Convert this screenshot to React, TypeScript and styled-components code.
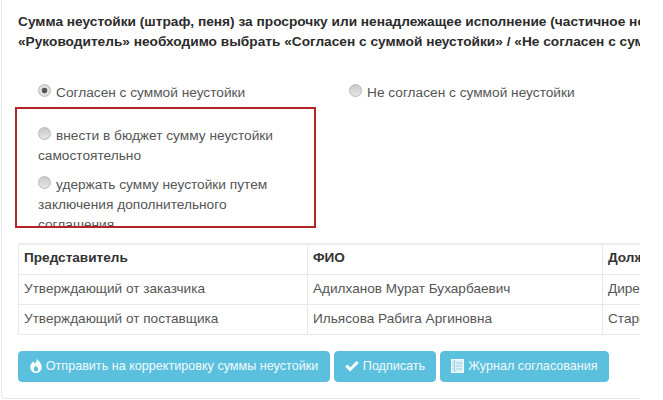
import React from 'react';
import styled, { createGlobalStyle } from 'styled-components';

const GlobalStyle = createGlobalStyle`
  html, body {
    margin: 0;
    padding: 0;
    background: #fff;
  }
  body {
    width: 663px;
    height: 400px;
    overflow: hidden;
    font-family: "Liberation Sans", Arial, sans-serif;
    font-size: 13.7px;
    line-height: 20px;
    color: #333;
  }
`;

const Clip = styled.div`
  width: 640px;
  height: 400px;
  overflow: hidden;
`;

const Panel = styled.section`
  box-sizing: border-box;
  width: 700px;
  height: 399px;
  margin-left: 1px;
  padding: 12px 0 0 16px;
  border: 1px solid #e6e6e6;
  border-top: 0;
  border-right: 0;
  border-radius: 0 0 0 5px;
`;

const Heading = styled.p`
  margin: 0;
  width: 640px;
  height: 40px;
  overflow: hidden;
  white-space: nowrap;
  font-weight: 700;
  color: #2b2b2b;
`;

const ChoiceRow = styled.div`
  display: grid;
  grid-template-columns: 311px 1fr;
  margin-top: 31px;
  padding-left: 20px;
  height: 20px;
  color: #555;
`;

const Choice = styled.label`
  display: flex;
  align-items: center;
  gap: 5px;
  white-space: nowrap;
`;

const RadioDot = styled.span<{ $checked?: boolean; $inline?: boolean }>`
  display: inline-block;
  box-sizing: border-box;
  flex: none;
  width: 13px;
  height: 13px;
  margin-top: ${({ $inline }) => ($inline ? '0' : '-6px')};
  margin-right: ${({ $inline }) => ($inline ? '5px' : '0')};
  border: 1px solid #b9b9b9;
  border-radius: 50%;
  background: ${({ $checked }) =>
    $checked
      ? 'radial-gradient(circle, #555 0 2.5px, #e4e4e4 3.2px, #d2d2d2 100%)'
      : 'linear-gradient(#c9c9c9, #e6e6e6)'};
`;

const Annotated = styled.div`
  box-sizing: border-box;
  width: 301px;
  height: 121px;
  margin: 4px 0 0 -3px;
  padding: 17px 20px 0 21px;
  border: 2px solid #b32428;
  overflow: hidden;
  color: #555;
`;

const SubChoice = styled.p`
  margin: 0 0 9px;
  width: 250px;
`;

const Table = styled.table`
  width: 640px;
  margin-top: 15px;
  border-collapse: collapse;
  table-layout: fixed;
  font-size: 13.6px;
  color: #555;
`;

const HeadCell = styled.th<{ $width: number }>`
  box-sizing: border-box;
  width: ${({ $width }) => $width}px;
  height: 30px;
  padding: 0 5px 2px;
  border: 1px solid #e8e8e8;
  border-top: 2px solid #ececec;
  text-align: left;
  font-weight: 700;
  color: #333;
  white-space: nowrap;
  overflow: hidden;
`;

const Cell = styled.td`
  box-sizing: border-box;
  height: 30px;
  padding: 0 5px;
  border: 1px solid #e8e8e8;
  white-space: nowrap;
  overflow: hidden;
`;

const Actions = styled.div`
  display: flex;
  gap: 4px;
  margin-top: 16px;
`;

const Action = styled.button<{ $width: number }>`
  display: flex;
  align-items: center;
  justify-content: center;
  gap: 4px;
  box-sizing: border-box;
  height: 31px;
  width: ${({ $width }) => $width}px;
  padding: 0;
  border: 1px solid #5bbcde;
  border-radius: 4px;
  background: #5bc0de;
  color: #f2fafd;
  font: 12.6px/20px "Liberation Sans", Arial, sans-serif;
  white-space: nowrap;
`;

const Flame = () => (
  <svg width="12" height="14" viewBox="0 0 12 14" fill="#fff">
    <path d="M6.5 0c.6 2.2-.4 3.2-1.7 4.500C3.600 3.800 3.600 2.800 3.700 2 1.500 3.800 0 6 .3 8.800.6 11.800 3 14 6 14s5.500-2.200 5.700-5.200C11.900 5.500 9.500 2 6.500 0zM6 12.500c-1.300 0-2.300-1-2.300-2.300 0-1.500 1.200-2.200 2-3.700 1.200 1.200 2.600 2.300 2.600 3.700 0 1.300-1 2.300-2.300 2.300z" />
  </svg>
);

const Check = () => (
  <svg width="14" height="12" viewBox="0 0 14 12" fill="#fff">
    <path d="M5.200 11.600 0.300 6.700 2.400 4.600 5.200 7.400 11.600 0.900 13.700 3z" />
  </svg>
);

const Journal = () => (
  <svg width="13" height="14" viewBox="0 0 13 14">
    <rect x="0.500" y="0.500" width="12" height="13" fill="#dff1f7" stroke="#f4fbfd" />
    <path d="M3.500 1v12" stroke="#8fd3e8" />
    <path d="M5 4h6M5 7h6M5 10h6M1 4h1.500M1 7h1.500M1 10h1.500" stroke="#8fd3e8" />
  </svg>
);

export default function App() {
  return (
    <>
      <GlobalStyle />
      <Clip>
        <Panel>
          <Heading>
            Сумма неустойки (штраф, пеня) за просрочку или ненадлежащее исполнение (частичное неисполнение)
            <br />
            «Руководитель» необходимо выбрать «Согласен с суммой неустойки» / «Не согласен с суммой неустойки»
          </Heading>

          <ChoiceRow>
            <Choice>
              <RadioDot $checked />
              Согласен с суммой неустойки
            </Choice>
            <Choice>
              <RadioDot />
              Не согласен с суммой неустойки
            </Choice>
          </ChoiceRow>

          <Annotated>
            <SubChoice>
              <RadioDot $inline />
              внести в бюджет сумму неустойки самостоятельно
            </SubChoice>
            <SubChoice>
              <RadioDot $inline />
              удержать сумму неустойки путем заключения дополнительного соглашения
            </SubChoice>
          </Annotated>

          <Table>
            <thead>
              <tr>
                <HeadCell $width={289}>Представитель</HeadCell>
                <HeadCell $width={295}>ФИО</HeadCell>
                <HeadCell $width={56}>Должность</HeadCell>
              </tr>
            </thead>
            <tbody>
              <tr>
                <Cell>Утверждающий от заказчика</Cell>
                <Cell>Адилханов Мурат Бухарбаевич</Cell>
                <Cell>Директор</Cell>
              </tr>
              <tr>
                <Cell>Утверждающий от поставщика</Cell>
                <Cell>Ильясова Рабига Аргиновна</Cell>
                <Cell>Старший</Cell>
              </tr>
            </tbody>
          </Table>

          <Actions>
            <Action $width={312}>
              <Flame />
              Отправить на корректировку суммы неустойки
            </Action>
            <Action $width={102}>
              <Check />
              Подписать
            </Action>
            <Action $width={169}>
              <Journal />
              Журнал согласования
            </Action>
          </Actions>
        </Panel>
      </Clip>
    </>
  );
}
